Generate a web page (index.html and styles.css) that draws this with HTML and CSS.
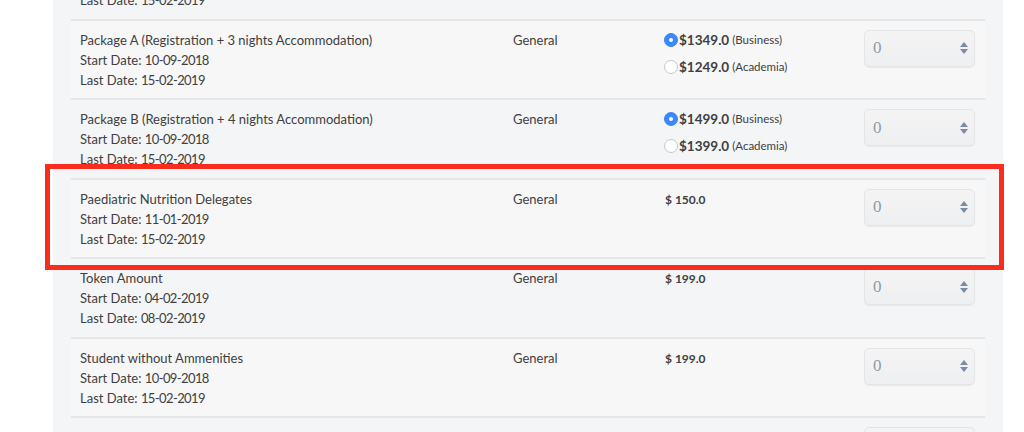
FILE: index.html
```html
<!DOCTYPE html>
<html>
<head>
<meta charset="utf-8">
<link rel="stylesheet" href="styles.css">
</head>
<body>
<div class="page">
  <div class="panel">
    <div class="row first">
      <div class="info">
        <div class="name">Early Bird Registration</div>
        <div>Start Date: <span class="d">10-09-2018</span></div>
        <div>Last Date: <span class="d">15-02-2019</span></div>
      </div>
      <div class="type">General</div>
      <div class="price"><span class="amount">$ 99.0</span></div>
      <div class="qty"><span class="val">0</span><span class="spin"><i class="up"></i><i class="down"></i></span></div>
    </div>
    <div class="row">
      <div class="info">
        <div class="name">Package A (Registration + 3 nights Accommodation)</div>
        <div>Start Date: <span class="d">10-09-2018</span></div>
        <div>Last Date: <span class="d">15-02-2019</span></div>
      </div>
      <div class="type">General</div>
      <div class="price">
        <div class="opt"><span class="radio on"></span><b>$1349.0</b><small>(Business)</small></div>
        <div class="opt"><span class="radio"></span><b>$1249.0</b><small>(Academia)</small></div>
      </div>
      <div class="qty"><span class="val">0</span><span class="spin"><i class="up"></i><i class="down"></i></span></div>
    </div>
    <div class="row">
      <div class="info">
        <div class="name">Package B (Registration + 4 nights Accommodation)</div>
        <div>Start Date: <span class="d">10-09-2018</span></div>
        <div>Last Date: <span class="d">15-02-2019</span></div>
      </div>
      <div class="type">General</div>
      <div class="price">
        <div class="opt"><span class="radio on"></span><b>$1499.0</b><small>(Business)</small></div>
        <div class="opt"><span class="radio"></span><b>$1399.0</b><small>(Academia)</small></div>
      </div>
      <div class="qty"><span class="val">0</span><span class="spin"><i class="up"></i><i class="down"></i></span></div>
    </div>
    <div class="row">
      <div class="info">
        <div class="name">Paediatric Nutrition Delegates</div>
        <div>Start Date: <span class="d">11-01-2019</span></div>
        <div>Last Date: <span class="d">15-02-2019</span></div>
      </div>
      <div class="type">General</div>
      <div class="price"><span class="amount">$ 150.0</span></div>
      <div class="qty"><span class="val">0</span><span class="spin"><i class="up"></i><i class="down"></i></span></div>
    </div>
    <div class="row">
      <div class="info">
        <div class="name">Token Amount</div>
        <div>Start Date: <span class="d">04-02-2019</span></div>
        <div>Last Date: <span class="d">08-02-2019</span></div>
      </div>
      <div class="type">General</div>
      <div class="price"><span class="amount">$ 199.0</span></div>
      <div class="qty"><span class="val">0</span><span class="spin"><i class="up"></i><i class="down"></i></span></div>
    </div>
    <div class="row">
      <div class="info">
        <div class="name">Student without Ammenities</div>
        <div>Start Date: <span class="d">10-09-2018</span></div>
        <div>Last Date: <span class="d">15-02-2019</span></div>
      </div>
      <div class="type">General</div>
      <div class="price"><span class="amount">$ 199.0</span></div>
      <div class="qty"><span class="val">0</span><span class="spin"><i class="up"></i><i class="down"></i></span></div>
    </div>
    <div class="row">
      <div class="info">
        <div class="name">Home Research Fee</div>
        <div>Start Date: <span class="d">10-09-2018</span></div>
        <div>Last Date: <span class="d">15-02-2019</span></div>
      </div>
      <div class="type">General</div>
      <div class="price"><span class="amount">$ 250.0</span></div>
      <div class="qty"><span class="val">0</span><span class="spin"><i class="up"></i><i class="down"></i></span></div>
    </div>
  </div>
  <div class="highlight"></div>
</div>
</body>
</html>
```

FILE: styles.css
```css
html, body {
  margin: 0;
  padding: 0;
  background: #ffffff;
  overflow: hidden;
}
body {
  font-family: "Lato", "Liberation Sans", sans-serif;
  font-size: 13px;
  color: #404040;
  width: 1024px;
  height: 432px;
}
.page {
  position: relative;
  height: 432px;
  overflow: hidden;
}
.panel {
  margin-left: 53px;
  width: 950px;
  box-sizing: border-box;
  padding: 0 18px;
  background: #f4f5f7;
  margin-top: -61px;
  height: 560px;
}
.row {
  display: grid;
  grid-template-columns: 433px 151px 200px 111px;
  padding: 9px 0 8.5px 9px;
  border-top: 2px solid #e5e6e8;
  line-height: 20px;
}
.row:nth-child(even) {
  background: #f7f7f8;
}
.row.first {
  border-top: none;
  padding-top: 11px;
}
.d {
  letter-spacing: -0.6px;
}
.price .amount {
  font-weight: 700;
  font-size: 12px;
  margin-left: 1px;
}
.opt {
  display: flex;
  align-items: center;
  height: 20px;
  margin-bottom: 7px;
}
.opt b {
  font-weight: 700;
  font-size: 13.5px;
  margin-left: 1px;
  margin-right: 3px;
}
.opt small {
  font-size: 11.5px;
}
.radio {
  width: 14px;
  height: 14px;
  box-sizing: border-box;
  border-radius: 50%;
  border: 1px solid #c8c8c8;
  background: #ffffff;
  position: relative;
}
.radio.on {
  border-color: #3a87f9;
  background: #3b88fb;
}
.radio.on::after {
  content: "";
  position: absolute;
  left: 4px;
  top: 4px;
  width: 4px;
  height: 4px;
  border-radius: 50%;
  background: #ffffff;
}
.qty {
  margin-top: 0;
  height: 37px;
  box-sizing: border-box;
  border: 1px solid #e4e5e7;
  border-radius: 5px;
  background: linear-gradient(#f4f4f5, #eeeff0);
  box-shadow: 0 1px 1px rgba(0, 0, 0, 0.06);
  display: flex;
  align-items: center;
  justify-content: space-between;
  padding: 0 6px 0 8px;
}
.val {
  font-family: "Liberation Serif", serif;
  font-size: 17px;
  color: #8e9aa6;
}
.spin {
  display: flex;
  flex-direction: column;
  gap: 2px;
}
.spin i {
  display: block;
  width: 0;
  height: 0;
  border-left: 4px solid transparent;
  border-right: 4px solid transparent;
}
.spin .up {
  border-bottom: 5px solid #7a8ca2;
}
.spin .down {
  border-top: 5px solid #7a8ca2;
}
.highlight {
  position: absolute;
  left: 45px;
  top: 164px;
  width: 959px;
  height: 106px;
  box-sizing: border-box;
  border: 5px solid #fb2b1e;
}
```
